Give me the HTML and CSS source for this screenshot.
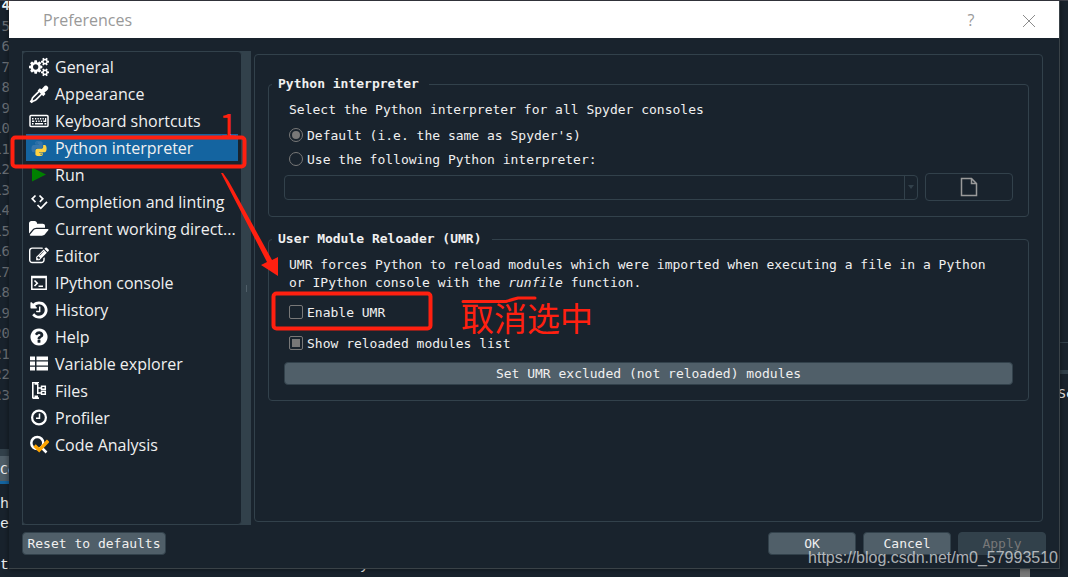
FILE: index.html
```html
<!DOCTYPE html>
<html lang="en">
<head>
    <meta charset="UTF-8">
    <meta name="viewport" content="width=device-width, initial-scale=1.0">
    <title>Preferences</title>
    <link rel="stylesheet" href="styles.css">
</head>
<body>

    <!-- Editor window behind the dialog -->
    <div class="backdrop">
        <div class="gutter">
            <b>4</b><span>5</span><span>6</span><span>7</span><span>8</span><span>9</span>
            <span>10</span><span>11</span><span>12</span><span>13</span><span>14</span><span>15</span>
            <span>16</span><span>17</span><span>18</span><span>19</span><span>20</span><span>21</span>
            <span>22</span><span>23</span>
        </div>
        <div class="console-tab">Co</div>
        <div class="console-line line-h">h</div>
        <div class="console-line line-e">e</div>
        <div class="console-line line-banner">IPython 7.19.0 -- An enhanced Interactive Python.</div>
        <div class="side-pane">Sc</div>
        <div class="scroll-thumb"></div>
    </div>

    <main class="dialog">
        <header class="titlebar">
            <h1>Preferences</h1>
            <button class="title-btn" type="button" aria-label="Help">?</button>
            <button class="title-btn" type="button" aria-label="Close">
                <svg width="14" height="14" viewBox="0 0 14 14"><path d="M1 1l12 12M13 1L1 13" stroke="#8c8c8c" fill="none"/></svg>
            </button>
        </header>

        <div class="content">
            <div class="columns">
                <div class="sidebar">
                    <nav class="pages">
                        <a href="#general">
                            <svg viewBox="0 0 1920 1792"><path d="M896 896q0-106-75-181t-181-75-181 75-75 181 75 181 181 75 181-75 75-181zm768 512q0-52-38-90t-90-38-90 38-38 90q0 53 37.5 90.5t90.5 37.5 90.5-37.5 37.5-90.5zm0-1024q0-52-38-90t-90-38-90 38-38 90q0 53 37.5 90.5t90.5 37.5 90.5-37.5 37.5-90.5zm-384 421v185q0 10-7 19.5t-16 10.5l-155 24q-11 35-32 76 34 48 90 115 7 11 7 20 0 12-7 19-23 30-82.5 89.5t-78.5 59.5q-11 0-21-7l-115-90q-37 19-77 31-11 108-23 155-7 24-30 24h-186q-11 0-20-7.5t-10-17.5l-23-153q-34-10-75-31l-118 89q-7 7-20 7-11 0-21-8-144-133-144-160 0-9 7-19 10-14 41-53t47-61q-23-44-35-82l-152-24q-10-1-17-9.5t-7-19.5v-185q0-10 7-19.5t16-10.5l155-24q11-35 32-76-34-48-90-115-7-11-7-20 0-12 7-20 22-30 82-89t79-59q11 0 21 7l115 90q34-18 77-32 11-108 23-154 7-24 30-24h186q11 0 20 7.5t10 17.5l23 153q34 10 75 31l118-89q8-7 20-7 11 0 21 8 144 133 144 160 0 8-7 19-12 16-42 54t-45 60q23 48 34 82l152 23q10 2 17 10.5t7 19.5zm640 533v140q0 16-149 31-12 27-30 52 51 113 51 138 0 4-4 7-122 71-124 71-8 0-46-47t-52-68q-20 2-30 2t-30-2q-14 21-52 68t-46 47q-2 0-124-71-4-3-4-7 0-25 51-138-18-25-30-52-149-15-149-31v-140q0-16 149-31 13-29 30-52-51-113-51-138 0-4 4-7 4-2 35-20t59-34 30-16q8 0 46 46.5t52 67.5q20-2 30-2t30 2q51-71 92-112l6-2q4 0 124 70 4 3 4 7 0 25-51 138 17 23 30 52 149 15 149 31zm0-1024v140q0 16-149 31-12 27-30 52 51 113 51 138 0 4-4 7-122 71-124 71-8 0-46-47t-52-68q-20 2-30 2t-30-2q-14 21-52 68t-46 47q-2 0-124-71-4-3-4-7 0-25 51-138-18-25-30-52-149-15-149-31v-140q0-16 149-31 13-29 30-52-51-113-51-138 0-4 4-7 4-2 35-20t59-34 30-16q8 0 46 46.5t52 67.5q20-2 30-2t30 2q51-71 92-112l6-2q4 0 124 70 4 3 4 7 0 25-51 138 17 23 30 52 149 15 149 31z"/></svg>
                            <span>General</span>
                        </a>
                        <a href="#appearance">
                            <svg viewBox="0 0 20 20"><path d="M10.800 4.300l1.800 1 2-2.400q2.200-2.300 4-.5 1.700 1.900-.6 4l-2.500 2 1 1.600-2.200 2.200-5.700-5.700z"/><path d="M10 7.300L4.200 13.100q-1 .8-1.200 2.600l-1.200 1.700.8.800 1.700-1.200q1.800-.2 2.600-1.200l5.800-5.800" fill="none" stroke="#fff" stroke-width="1.700"/></svg>
                            <span>Appearance</span>
                        </a>
                        <a href="#shortcuts">
                            <svg viewBox="0 0 20 20"><rect x="1" y="4.500" width="18" height="11" rx="1" fill="none" stroke="#fff" stroke-width="1.500"/><path d="M3 7h1.500v1.500H3zM6 7h1.300v1.500H6zM8.500 7h1.300v1.500H8.500zM11 7h1.300v1.500H11zM13.500 7h1.300v1.500h-1.300zM3 9.500h2.300V11H3zM6.800 9.500h1.300V11H6.800zM9.300 9.500h1.300V11H9.300zM11.800 9.500h1.300V11h-1.300zM16 7h1.300v4h-3V9.500H16zM3 12h1.500v1.500H3zM6 12h8v1.500H6zM15.500 12h1.800v1.500h-1.800z"/></svg>
                            <span>Keyboard shortcuts</span>
                        </a>
                        <a class="selected" href="#interpreter">
                            <svg viewBox="-4 -5 32 32">
                                <path fill="#3776ab" d="M14.250.18l.9.200.73.260.59.300.45.320.34.340.25.340.16.330.1.300.04.260.02.200-.01.130V8.500l-.05.630-.13.550-.21.460-.26.380-.3.310-.33.250-.35.190-.35.140-.33.100-.3.070-.26.040-.21.020H8.770l-.69.050-.59.140-.5.220-.41.270-.33.320-.27.350-.2.360-.15.370-.1.350-.07.320-.04.270-.02.210v3.060H3.170l-.21-.03-.28-.07-.32-.12-.35-.18-.36-.26-.36-.36-.35-.46-.32-.59-.28-.73-.21-.88-.14-1.050-.05-1.230.06-1.220.16-1.040.24-.87.32-.71.36-.57.4-.44.42-.33.42-.24.4-.16.36-.1.320-.05.24-.01h.16l.06.010h8.160v-.83H6.180l-.01-2.750-.02-.37.050-.34.110-.31.170-.28.250-.26.310-.23.380-.2.440-.18.510-.15.580-.12.640-.1.710-.06.770-.04.840-.02 1.270.05z"/>
                                <path fill="#ffd343" d="M21.100 6.110l.28.060.32.120.35.180.36.270.36.350.35.470.32.590.28.730.21.880.14 1.040.05 1.230-.06 1.230-.16 1.040-.24.860-.32.710-.36.570-.4.450-.42.330-.42.240-.4.160-.36.090-.32.050-.24.020-.16-.01h-8.220v.82h5.840l.01 2.760.02.360-.05.340-.11.310-.17.290-.25.250-.31.240-.38.200-.44.170-.51.150-.58.130-.64.090-.71.070-.77.040-.84.010-1.270-.04-1.070-.14-.9-.2-.73-.25-.59-.3-.45-.33-.34-.34-.25-.34-.16-.33-.1-.3-.04-.25-.02-.2.010-.13v-5.340l.05-.64.130-.54.210-.46.260-.38.3-.32.330-.24.350-.2.350-.14.330-.1.300-.06.260-.04.210-.02.130-.01h5.840l.69-.05.590-.14.500-.21.410-.28.330-.32.270-.35.200-.36.150-.36.100-.35.070-.32.040-.28.020-.21V6.070h2.090l.14.010z"/>
                                <circle cx="8.770" cy="3" r="1.100" fill="#1464a0"/><circle cx="15.400" cy="21" r="1.100" fill="#1464a0"/>
                            </svg>
                            <span>Python interpreter</span>
                        </a>
                        <a href="#run">
                            <svg viewBox="0 0 20 20"><path fill="#008000" d="M3 2.500L17 9.500 3 16.500z"/></svg>
                            <span>Run</span>
                        </a>
                        <a href="#completion">
                            <svg viewBox="0 0 20 20"><path d="M6.500 3.500L3.200 6.800l3.300 3.300M10.500 3.500l3.300 3.300-3 3M8.500 13l3.300 3.300L18 9.800" fill="none" stroke="#fff" stroke-width="1.700"/></svg>
                            <span>Completion and linting</span>
                        </a>
                        <a href="#directory">
                            <svg viewBox="0 0 1920 1792"><path d="M1879 952q0 31-31 66l-336 396q-43 51-120.500 86.500t-143.500 35.500h-1088q-34 0-60.500-13t-26.500-43q0-31 31-66l336-396q43-51 120.500-86.500t143.500-35.500h1088q34 0 60.500 13t26.500 43zm-343-344v160h-832q-94 0-197 47.500t-164 119.500l-337 396-5 6q0-4-.5-12.500t-.5-12.500v-960q0-92 66-158t158-66h320q92 0 158 66t66 158v32h544q92 0 158 66t66 158z"/></svg>
                            <span>Current working direct...</span>
                        </a>
                        <a href="#editor">
                            <svg viewBox="0 0 1792 1792"><path d="M888 1184l116-116-152-152-116 116v56h96v96h56zm440-720q-16-16-33 1l-350 350q-17 17-1 33t33-1l350-350q17-17 1-33zm80 594v190q0 119-84.500 203.500t-203.500 84.500h-832q-119 0-203.500-84.500t-84.500-203.500v-832q0-119 84.500-203.500t203.500-84.500h832q63 0 117 25 15 7 18 23 3 17-9 29l-49 49q-14 14-32 8-23-6-45-6h-832q-66 0-113 47t-47 113v832q0 66 47 113t113 47h832q66 0 113-47t47-113v-126q0-13 9-22l64-64q15-15 35-7t20 29zm-96-738l288 288-672 672h-288v-288zm444 132l-92 92-288-288 92-92q28-28 68-28t68 28l152 152q28 28 28 68t-28 68z"/></svg>
                            <span>Editor</span>
                        </a>
                        <a href="#ipython">
                            <svg viewBox="0 0 20 20"><path d="M2.800 3.500h14.400v12.700H2.800zM2.800 4.500h14.400" fill="none" stroke="#fff" stroke-width="1.500"/><path d="M5.500 7.500l2.800 2.700L5.500 13M9.500 13.200h4.500" fill="none" stroke="#fff" stroke-width="1.600"/></svg>
                            <span>IPython console</span>
                        </a>
                        <a href="#history">
                            <svg viewBox="0 0 1792 1792"><path d="M1664 896q0 156-61 298t-164 245-245 164-298 61q-172 0-327-72.500t-264-204.500q-7-10-6.500-22.500t8.500-20.500l137-138q10-9 25-9 16 2 23 12 73 95 179 147t225 52q104 0 198.500-40.500t163.500-109.500 109.500-163.500 40.500-198.500-40.500-198.500-109.500-163.500-163.500-109.500-198.500-40.500q-98 0-188 35.500t-160 101.500l137 138q31 30 14 69-17 40-59 40h-448q-26 0-45-19t-19-45v-448q0-42 40-59 39-17 69 14l130 129q107-101 244.500-156.500t284.500-55.500q156 0 298 61t245 164 164 245 61 298zM1024 608v448q0 14-9 23t-23 9h-320q-14 0-23-9t-9-23v-64q0-14 9-23t23-9h224v-352q0-14 9-23t23-9h64q14 0 23 9t9 23z"/></svg>
                            <span>History</span>
                        </a>
                        <a href="#help">
                            <svg viewBox="0 0 1792 1792"><path d="M1024 1376v-192q0-14-9-23t-23-9h-192q-14 0-23 9t-9 23v192q0 14 9 23t23 9h192q14 0 23-9t9-23zm256-672q0-88-55.500-163t-138.500-116-170-41q-243 0-371 213-15 24 8 42l132 100q7 6 19 6 16 0 25-12 53-68 86-92 34-24 86-24 48 0 85.500 26t37.500 59q0 38-20 61t-68 45q-63 28-115.500 86.500t-52.500 125.500v36q0 14 9 23t23 9h192q14 0 23-9t9-23q0-19 21.500-49.500t54.500-49.500q32-18 49-28.500t46-35 44.500-48 28-60.500 12.500-81zm384 192q0 209-103 385.500t-279.500 279.500-385.500 103-385.500-103-279.500-279.500-103-385.500 103-385.500 279.500-279.500 385.500-103 385.500 103 279.500 279.500 103 385.500z"/></svg>
                            <span>Help</span>
                        </a>
                        <a href="#variables">
                            <svg viewBox="0 0 20 20"><path d="M1 2.500h5v3.800H1zM7.500 2.500H19v3.800H7.500zM1 7.600h5v3.800H1zM7.500 7.600H19v3.800H7.500zM1 12.700h5v3.800H1zM7.500 12.700H19v3.800H7.500z"/></svg>
                            <span>Variable explorer</span>
                        </a>
                        <a href="#files">
                            <svg viewBox="0 0 20 20"><path d="M3 1h1.600v16.500H3zM4 1h6v1.300H9v1.500H5.500V2.300H4zM4 16.200h6v1.800H4zM5.500 14.500H9v2H5.500zM8 3h1.500v10H8zM9 6.300h3v1.400H9zM9 11.300h3v1.400H9z"/><path d="M12.500 5.200h3.800v3h-3.800zM12.500 10.300h3.800v3h-3.800z" fill="none" stroke="#fff" stroke-width="1.500"/></svg>
                            <span>Files</span>
                        </a>
                        <a href="#profiler">
                            <svg viewBox="0 0 20 20"><circle cx="10" cy="9.500" r="6.900" fill="none" stroke="#fff" stroke-width="2.200"/><path d="M10.500 5.500v4.800H7" fill="none" stroke="#fff" stroke-width="1.500"/></svg>
                            <span>Profiler</span>
                        </a>
                        <a href="#analysis">
                            <svg viewBox="0 0 20 20"><circle cx="8.300" cy="8" r="6" fill="none" stroke="#fff" stroke-width="2.500"/><path d="M12 12l5.500 5.500" stroke="#fff" stroke-width="2.500"/><path d="M5.500 10.500l4.700 4.600 9-9.300" fill="none" stroke="#ffa500" stroke-width="3.500"/></svg>
                            <span>Code Analysis</span>
                        </a>
                    </nav>
                    <div class="splitter"></div>
                </div>

                <section class="panel">
                    <fieldset class="group">
                        <legend>Python interpreter</legend>
                        <p class="intro">Select the Python interpreter for all Spyder consoles</p>
                        <label class="option"><input type="radio" name="interpreter" checked> Default (i.e. the same as Spyder's)</label>
                        <label class="option"><input type="radio" name="interpreter"> Use the following Python interpreter:</label>
                        <div class="path-row">
                            <div class="combo">
                                <select aria-label="Interpreter path" disabled><option></option></select>
                                <span class="combo-arrow"></span>
                            </div>
                            <button class="browse" type="button" aria-label="Select file" disabled>
                                <svg width="18" height="20" viewBox="0 0 18 20"><path d="M1.500 1.500h10l5 5v12h-15zM11.500 1.500v5h5" fill="none" stroke="#9a9a9a" stroke-width="1.500"/></svg>
                            </button>
                        </div>
                    </fieldset>

                    <fieldset class="group">
                        <legend>User Module Reloader (UMR)</legend>
                        <p class="intro">UMR forces Python to reload modules which were imported when executing a file in a Python or IPython console with the <i>runfile</i> function.</p>
                        <div class="checks">
                            <label class="option"><input type="checkbox"> Enable UMR</label>
                            <label class="option"><input type="checkbox" checked> Show reloaded modules list</label>
                        </div>
                        <button class="btn wide" type="button">Set UMR excluded (not reloaded) modules</button>
                    </fieldset>
                </section>
            </div>

            <footer class="actions">
                <button class="btn reset" type="button">Reset to defaults</button>
                <button class="btn" type="button">OK</button>
                <button class="btn" type="button">Cancel</button>
                <button class="btn" type="button" disabled>Apply</button>
            </footer>
        </div>
    </main>

    <!-- Red marker notes drawn over the dialog -->
    <div class="notes">
        <svg width="620" height="360" viewBox="0 0 620 360">
            <rect x="12.500" y="137.500" width="232" height="29" rx="3" fill="none" stroke="#ff2010" stroke-width="4"/>
            <rect x="273.500" y="293.500" width="157" height="35" rx="3" fill="none" stroke="#ff2010" stroke-width="4"/>
            <path d="M221 173h2q6 8 10 16l39 71 6-3v19l-17-11 6-3z" fill="#ff2010"/>
            <path d="M463 301.500h43q6-2 12-3.500h17" fill="none" stroke="#ff2010" stroke-width="3" stroke-linecap="round"/>
        </svg>
        <span class="note step">1</span>
        <span class="note uncheck" lang="zh">取消选中</span>
    </div>
    <div class="watermark">https://blog.csdn.net/m0_57993510</div>

</body>
</html>
```
FILE: styles.css
```css
* {
    box-sizing: border-box;
}
body {
    margin: 0;
    padding: 1px 8px 8px 9px;
    height: 100vh;
    display: flex;
    overflow: hidden;
    background: #19232d;
    color: #f0f0f0;
    font-family: "DejaVu Sans Mono", monospace;
    font-size: 13px;
}
h1, p, fieldset {
    margin: 0;
}
button, input, select {
    font: inherit;
    color: inherit;
}

/* Editor behind */
.backdrop {
    position: absolute;
    inset: 0;
    overflow: hidden;
    border-top: 1px solid #3e404a;
    background: #19232d;
}
.gutter {
    position: absolute;
    top: -6px;
    left: -20px;
    width: 30px;
    height: 410px;
    display: flex;
    flex-direction: column;
    justify-content: space-between;
    text-align: right;
    font-size: 14px;
    line-height: 20px;
    color: #6c7177;
}
.gutter b {
    color: #fff;
}
.console-tab {
    position: absolute;
    top: 448px;
    left: 0;
    width: 20px;
    height: 35px;
    padding-top: 7px;
    border-top: 7px solid #32414b;
    border-bottom: 3px solid #1464a0;
    background: #505f69;
    line-height: 14px;
}
.console-line {
    position: absolute;
    left: 0;
    font-family: "Liberation Mono", monospace;
    font-size: 15px;
    line-height: 20px;
    white-space: nowrap;
}
.line-h {
    top: 494px;
}
.line-e {
    top: 514px;
}
.line-banner {
    top: 555px;
    left: -27px;
}
.side-pane {
    position: absolute;
    top: 341px;
    right: 0;
    width: 10px;
    padding-top: 42px;
    border-top: 1px solid #32414b;
    line-height: 18px;
    background: linear-gradient(#32414b, #32414b) 0 27px / 100% 4px no-repeat;
}
.scroll-thumb {
    position: absolute;
    bottom: 0;
    left: 1020px;
    width: 10px;
    height: 9px;
    background: #787878;
}

/* Dialog */
.dialog {
    position: relative;
    flex: 1;
    display: flex;
    flex-direction: column;
    background: #19232d;
    border-right: 1px solid #3a4247;
    border-bottom: 1px solid #3a4247;
    box-shadow: 0 0 6px rgba(0, 0, 0, 0.5);
}
.titlebar {
    display: flex;
    align-items: center;
    height: 37px;
    padding: 0 1px 0 34px;
    background: #fff;
    color: #999;
    font-family: "Open Sans", sans-serif;
}
.titlebar h1 {
    flex: 1;
    font-size: 16px;
    font-weight: normal;
}
.title-btn {
    width: 58px;
    height: 36px;
    padding: 0;
    border: none;
    background: none;
    font-size: 16px;
}
.title-btn svg {
    vertical-align: middle;
}
.content {
    flex: 1;
    display: flex;
    flex-direction: column;
    gap: 7px;
    padding: 13px;
}
.columns {
    flex: 1;
    display: flex;
}

/* Page list */
.sidebar {
    display: flex;
    width: 229px;
    background: #32414b;
}
.pages {
    flex: 1;
    padding: 1px 3px;
    border: 1px solid #32414b;
    border-radius: 4px;
    background: #19232d;
    font-family: "Open Sans", sans-serif;
    font-size: 16px;
}
.pages a {
    display: flex;
    align-items: center;
    gap: 6px;
    height: 27px;
    padding-left: 3px;
    color: #f0f0f0;
    text-decoration: none;
    white-space: nowrap;
}
.pages a.selected {
    background: #1464a0;
}
.pages svg {
    width: 20px;
    height: 20px;
    fill: #fff;
}
.splitter {
    width: 9px;
    background: linear-gradient(#505f69, #505f69) 4px 50% / 1px 7px no-repeat;
}

/* Settings */
.panel {
    flex: 1;
    margin: 3px;
    padding: 20px 13px;
    border: 1px solid #32414b;
    border-radius: 4px;
}
.group {
    min-width: 0;
    margin-bottom: 13px;
    padding: 8px 15px 15px;
    border: 1px solid #32414b;
    border-radius: 4px;
}
.group legend {
    margin-left: -12px;
    padding: 0 10px 0 6px;
    line-height: 18px;
    font-weight: bold;
}
.intro {
    padding: 0 5px 4px;
    line-height: 18px;
}
.option {
    display: flex;
    align-items: center;
    gap: 4px;
    height: 24px;
    padding-left: 5px;
}
.option input {
    appearance: none;
    width: 14px;
    height: 14px;
    margin: 0;
    border: 1px solid #787878;
    border-radius: 2px;
}
.option input[type="radio"] {
    border-radius: 50%;
}
.option input:checked {
    padding: 2px;
    background: #787878 content-box;
}
.checks {
    display: grid;
    gap: 7px;
    padding: 4px 0 7px;
}
.path-row {
    display: flex;
    align-items: center;
    gap: 7px;
    margin-top: 2px;
}
.combo {
    position: relative;
    flex: 1;
    display: flex;
}
.combo select {
    appearance: none;
    flex: 1;
    height: 25px;
    border: 1px solid #32414b;
    border-radius: 4px;
    background: none;
    opacity: 1;
}
.combo-arrow {
    position: absolute;
    top: 1px;
    right: 1px;
    bottom: 1px;
    width: 13px;
    display: flex;
    align-items: center;
    justify-content: center;
    border-left: 1px solid #32414b;
    pointer-events: none;
}
.combo-arrow::after {
    content: "";
    border: 3px solid transparent;
    border-top: 4px solid #32414b;
    border-bottom: none;
}
.browse {
    display: flex;
    align-items: center;
    justify-content: center;
    width: 88px;
    height: 28px;
    border: 1px solid #32414b;
    border-radius: 4px;
    background: none;
}
.btn {
    width: 88px;
    height: 23px;
    padding: 0;
    border: 1px solid #32414b;
    border-radius: 4px;
    background: #505f69;
    color: #f0f0f0;
}
.btn:disabled {
    background: #32414b;
    color: #787878;
}
.btn.wide {
    width: 100%;
}
.actions {
    display: flex;
    gap: 7px;
}
.btn.reset {
    width: 144px;
    margin-right: auto;
}

/* Notes and watermark */
.notes {
    position: absolute;
    top: 0;
    left: 0;
    pointer-events: none;
}
.note {
    position: absolute;
    color: #ff2010;
    font-family: "Noto Sans CJK SC", sans-serif;
    font-size: 33px;
    line-height: 40px;
    white-space: nowrap;
}
.step {
    top: 104px;
    left: 219px;
}
.uncheck {
    top: 297px;
    left: 461px;
}
.watermark {
    position: absolute;
    right: 10px;
    bottom: 9px;
    color: rgba(255, 255, 255, 0.65);
    font-family: "Liberation Sans", sans-serif;
    font-size: 16px;
    line-height: 20px;
}
```
